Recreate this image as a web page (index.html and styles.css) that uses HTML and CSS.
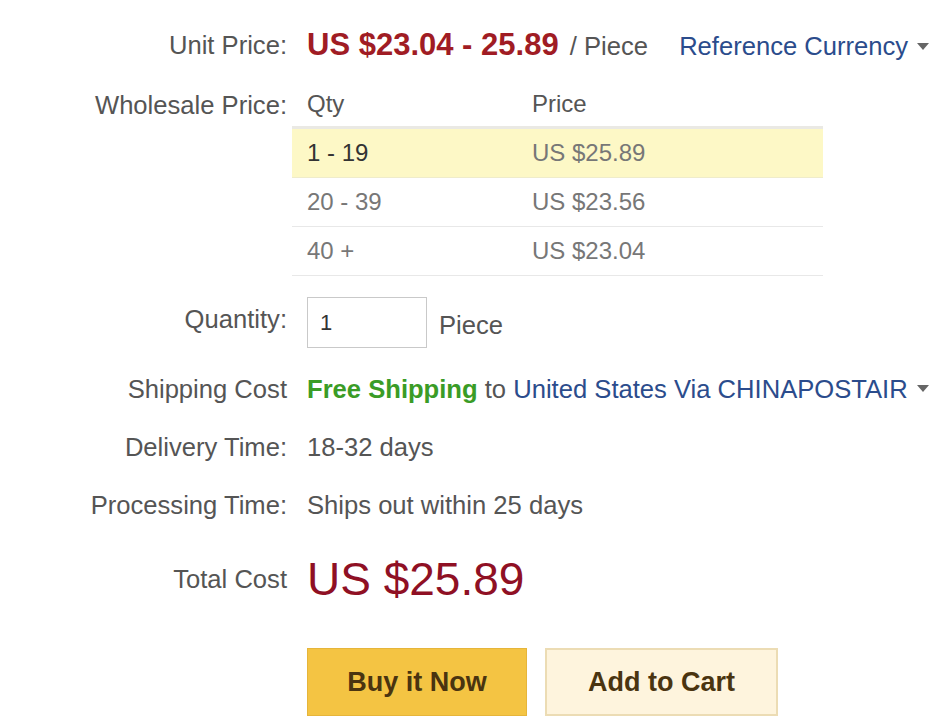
FILE: index.html
```html
<!DOCTYPE html>
<html lang="en">
<head>
    <meta charset="UTF-8">
    <meta name="viewport" content="width=device-width, initial-scale=1.0">
    <title>Product Price</title>
    <link rel="stylesheet" href="styles.css">
</head>
<body>
    <div class="buy-box">
        <div class="row row-unit">
            <div class="label">Unit Price:</div>
            <div class="value">
                <span class="price-range">US $23.04 - 25.89</span>
                <span class="unit">/ Piece</span>
                <a href="#" class="link currency">Reference Currency <span class="caret"></span></a>
            </div>
        </div>

        <div class="row row-wholesale">
            <div class="label">Wholesale Price:</div>
            <div class="value">
                <table class="wholesale">
                    <thead>
                        <tr><th>Qty</th><th>Price</th></tr>
                    </thead>
                    <tbody>
                        <tr class="current"><td>1 - 19</td><td>US $25.89</td></tr>
                        <tr><td>20 - 39</td><td>US $23.56</td></tr>
                        <tr><td>40 +</td><td>US $23.04</td></tr>
                    </tbody>
                </table>
            </div>
        </div>

        <div class="row row-qty">
            <div class="label">Quantity:</div>
            <div class="value">
                <input type="text" class="qty-input" value="1">
                <span class="unit-big">Piece</span>
            </div>
        </div>

        <div class="row row-info">
            <div class="label">Shipping Cost</div>
            <div class="value">
                <span class="free">Free Shipping</span> to
                <a href="#" class="link">United States Via CHINAPOSTAIR <span class="caret"></span></a>
            </div>
        </div>

        <div class="row row-info">
            <div class="label">Delivery Time:</div>
            <div class="value">18-32 days</div>
        </div>

        <div class="row row-info">
            <div class="label">Processing Time:</div>
            <div class="value">Ships out within 25 days</div>
        </div>

        <div class="row row-total">
            <div class="label">Total Cost</div>
            <div class="value total">US $25.89</div>
        </div>

        <div class="row row-buttons">
            <div class="label"></div>
            <div class="value buttons">
                <button class="btn btn-buy">Buy it Now</button>
                <button class="btn btn-cart">Add to Cart</button>
            </div>
        </div>
    </div>
</body>
</html>
```

FILE: styles.css
```css
/* Base styles */
body {
    margin: 0;
    background: #fff;
    font-family: "Liberation Sans", Arial, sans-serif;
    font-size: 25.6px;
    color: #555;
}

.buy-box {
    padding-top: 20px;
}

.row {
    display: flex;
    align-items: center;
}

.label {
    width: 287px;
    flex-shrink: 0;
    margin-right: 20px;
    text-align: right;
    color: #555;
    white-space: nowrap;
}

.value {
    white-space: nowrap;
    color: #555;
}

/* Unit price */
.row-unit {
    height: 50px;
}

.price-range {
    font-size: 31px;
    font-weight: bold;
    color: #a01c24;
}

.unit {
    margin-left: 4px;
}

.link {
    color: #2b4c8c;
    text-decoration: none;
}

.currency {
    margin-left: 24px;
}

.caret {
    display: inline-block;
    width: 0;
    height: 0;
    border-left: 6px solid transparent;
    border-right: 6px solid transparent;
    border-top: 7px solid #666;
    vertical-align: middle;
    margin-left: 2px;
    margin-top: -4px;
}

/* Wholesale table */
.row-wholesale {
    align-items: flex-start;
}

.row-wholesale .label {
    line-height: 46px;
    margin-top: 12px;
}

.row-wholesale .value {
    margin-left: -15px;
}

.wholesale {
    border-collapse: collapse;
    width: 531px;
    margin-top: 12px;
    font-size: 24px;
}

.wholesale th {
    text-align: left;
    font-weight: normal;
    color: #555;
    height: 44px;
    padding: 0 15px;
    border-bottom: 3px solid #eae9e4;
}

.wholesale th:first-child,
.wholesale td:first-child {
    width: 195px;
}

.wholesale td {
    height: 48px;
    padding: 0 15px;
    color: #777;
    border-bottom: 1px solid #e8e8e8;
}

.wholesale tr.current td {
    background: #fdf8c6;
    border-bottom-color: #efeccb;
}

.wholesale tr.current td:first-child {
    color: #333;
}

/* Quantity */
.row-qty {
    align-items: flex-start;
    margin-top: 21px;
}

.row-qty .label {
    line-height: 44px;
}

.row-qty .value {
    display: flex;
    align-items: center;
}

.qty-input {
    width: 120px;
    height: 51px;
    box-sizing: border-box;
    border: 1px solid #c9c9c9;
    padding: 0 12px;
    font-family: "Liberation Sans", Arial, sans-serif;
    font-size: 22px;
    color: #333;
    margin: 0;
}

.unit-big {
    margin-left: 12px;
    margin-top: 6px;
}

/* Info rows */
.row-info {
    height: 58px;
}

.row-qty + .row-info {
    margin-top: 12px;
}

.free {
    color: #3a9c26;
    font-weight: bold;
}

/* Total */
.row-total {
    height: 70px;
    margin-top: 10px;
}

.total {
    font-size: 46px;
    color: #8f1024;
}

/* Buttons */
.row-buttons {
    margin-top: 34px;
}

.buttons {
    display: flex;
    gap: 18px;
}

.btn {
    height: 68px;
    font-family: "Liberation Sans", Arial, sans-serif;
    font-size: 27px;
    font-weight: bold;
    color: #4a3410;
    cursor: pointer;
    margin: 0;
    padding: 0;
}

.btn-buy {
    width: 220px;
    background: #f4c443;
    border: 1px solid #e6b53a;
}

.btn-cart {
    width: 233px;
    background: #fef4dd;
    border: 2px solid #ecdcb4;
}
```
